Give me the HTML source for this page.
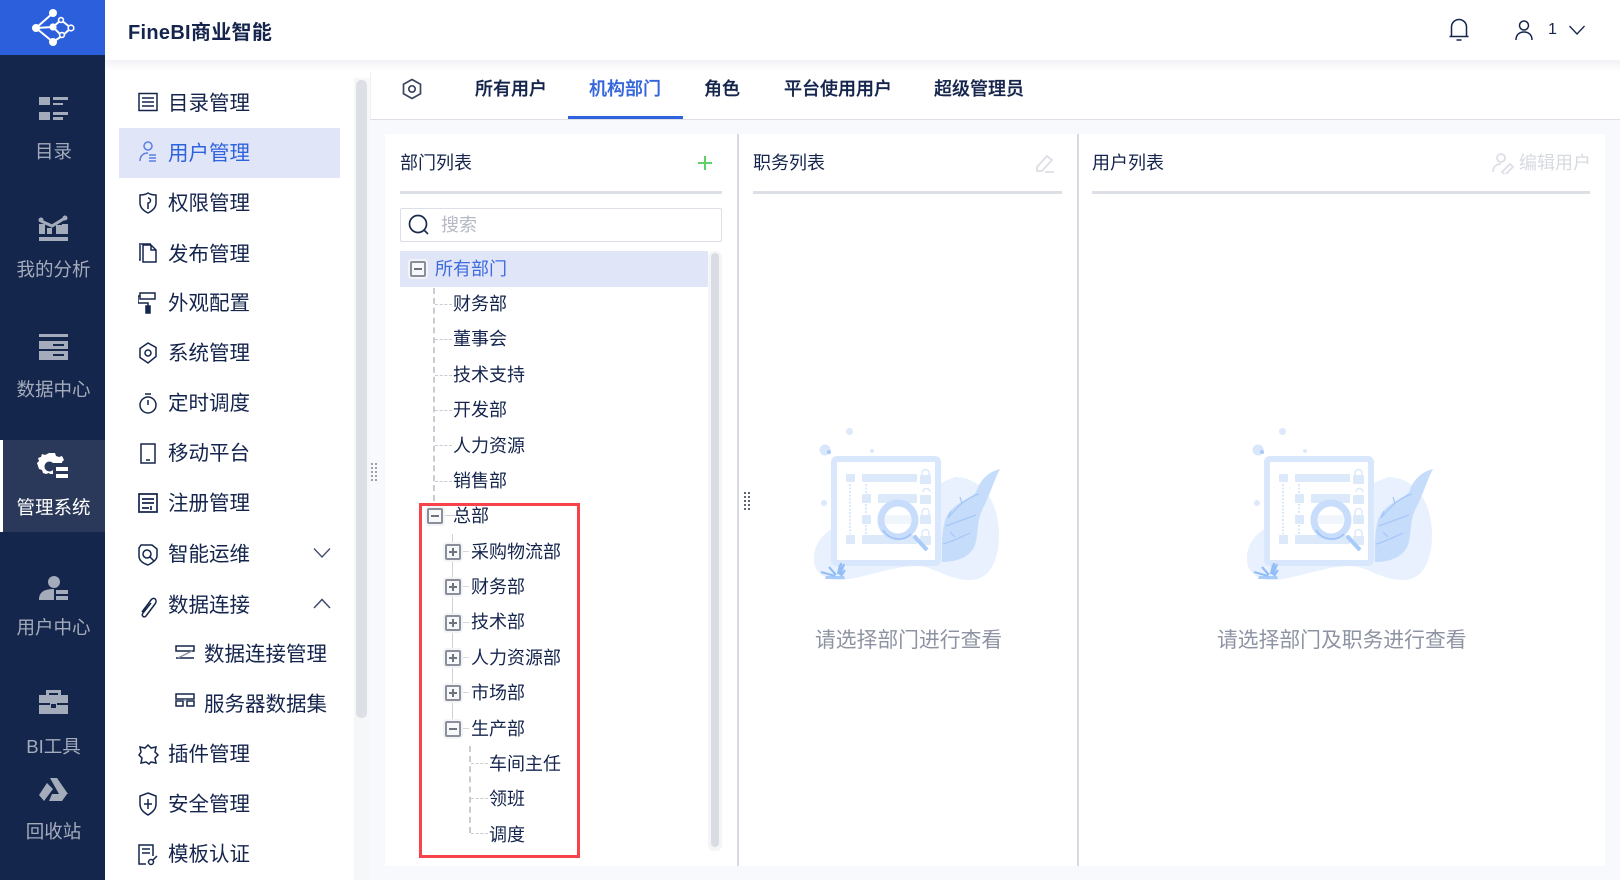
<!DOCTYPE html>
<html lang="zh">
<head>
<meta charset="utf-8">
<title>FineBI</title>
<style>
html,body{margin:0;padding:0;width:1620px;height:880px;overflow:hidden;background:#fff}
body{position:relative;font-family:"Liberation Sans","Noto Sans CJK SC",sans-serif;color:#14244c}
div,span,svg{position:absolute;display:block}
.t{white-space:nowrap;line-height:30px;height:30px}
.side{left:0;width:107px;text-align:center;font-size:18.5px;color:#a4abba}
.m{font-size:20.5px;left:168px;color:#14244c}
.tab{font-size:18px;top:74px;font-weight:500;-webkit-text-stroke:.25px #14244c}
.tr{font-size:18px}
.box{width:12px;height:12px;border:2px solid #8b8f9b;border-radius:2px;background:#f7f8fa;box-shadow:0 0 0 2px #f3f4f6}
.box i{position:absolute;left:2px;top:5px;width:8px;height:2px;background:#6f7380;display:block}
.box b{position:absolute;left:5px;top:2px;width:2px;height:8px;background:#6f7380;display:block}
.hd{font-size:18px;top:148px}
.ln{height:3px;top:191px;background:#dcdfe6}
.dh{left:0;height:0;border-top:1px dashed #c9ccd3}
.dv{width:0;border-left:2px dashed #c9ccd3}
.ic{fill:none;stroke:#15264c;stroke-width:1.5}
</style>
</head>
<body>
<!-- left nav -->
<div style="left:0;top:0;width:105px;height:880px;background:#15264c"></div>
<div style="left:0;top:0;width:105px;height:55px;background:#2c5fdc"></div>
<svg style="left:0;top:0" width="105" height="55" viewBox="0 0 105 55">
<g stroke="#fff" stroke-width="2" fill="none"><path d="M53 13 36 28 53 42M36 28 53 27 62 36 53 42M53 27 61 20 71 28 62 36"/></g>
<g fill="#fff"><circle cx="53" cy="13" r="4"/><circle cx="36" cy="28" r="4"/><circle cx="53" cy="27" r="3.6"/><circle cx="53" cy="42" r="4"/></g>
<g fill="#2c5fdc" stroke="#fff" stroke-width="1.6"><circle cx="61" cy="20" r="2.4"/><circle cx="71" cy="28" r="2.8"/><circle cx="62" cy="35" r="2.4"/></g>
</svg>
<div style="left:0;top:440px;width:105px;height:92px;background:#2a3859"></div>
<div style="left:0;top:440px;width:3px;height:92px;background:#fff"></div>
<svg style="left:0;top:90px" width="105" height="720" viewBox="0 90 105 720" fill="#a4abba">
<!-- catalog -->
<path d="M39 97h11v8H39zM39 112h11v8H39zM53 97h15v3H53zM53 103h10v2H53zM53 112h15v3H53zM53 117h10v3H53z"/>
<!-- analysis -->
<path d="M39 237h29v4H39zM39 224h6v10h-6zM47 228h5v6h-5zM56 225h6v9h-6zM62 224h6v10h-6z"/><path d="M41 221l11 5 13-8" fill="none" stroke="#a4abba" stroke-width="3"/><circle cx="41" cy="220" r="2.5"/><circle cx="65" cy="218" r="2.5"/>
<!-- data center -->
<path d="M39 334h29v3H39zM39 341h29v8H39zM39 351h29v9H39z"/><path d="M53 344h11v2H53zM53 354h11v2H53z" fill="#15264c"/>
<!-- users -->
<circle cx="54" cy="582" r="6"/><path d="M39 600c0-8 5-11 15-11v11zM56 590h12v4H56zM56 596h12v4H56z"/>
<!-- BI tool -->
<path d="M46 695v-5h15v5h7v8H39v-8zM49 695h9v-2h-9zM39 705h11v-2h7v2h11v9H39zM50 703h7v6h-7z"/><path d="M51 704h5v4h-5z" fill="#15264c"/>
<!-- recycle -->
<path d="M50 778h7l11 16h-9zM47 783l-8 12 5 6 9-12zM49 801l3-7h15l-5 7z"/>
</svg>
<svg style="left:0;top:450px" width="105" height="35" viewBox="0 450 105 35">
<path fill="#fff" d="M49 453h6l1 3 3 1 3-1 2 4-2 2v1h-9a5 5 0 1 0 0 7v4h-3l-1-1-3 1-3-1-1-3-3-1-1-3-1-3 2-2-1-3 3-1 1-3 3 1zM56 467h12v4H56zM56 474h12v4H56z"/>
</svg>
<div class="t side" style="top:137px">目录</div>
<div class="t side" style="top:255px">我的分析</div>
<div class="t side" style="top:375px">数据中心</div>
<div class="t side" style="top:493px;color:#fff">管理系统</div>
<div class="t side" style="top:613px">用户中心</div>
<div class="t side" style="top:732px">BI工具</div>
<div class="t side" style="top:817px">回收站</div>

<!-- header -->
<div class="t" style="left:128px;top:18px;font-size:20px;font-weight:700;letter-spacing:.3px">FineBI商业智能</div>
<div style="left:105px;top:60px;width:1515px;height:11px;background:linear-gradient(#f1f2f5,#fff)"></div>
<svg style="left:1448px;top:18px" width="22" height="24" viewBox="0 0 22 24" class="ic"><path d="M3.5 18.5V9a7.5 7.5 0 0 1 15 0v9.500zM1.500 18.500h19M8.500 22h5"/></svg>
<svg style="left:1512px;top:19px" width="24" height="24" viewBox="0 0 24 24" fill="none" stroke="#15264c" stroke-width="1.500"><circle cx="12" cy="6.500" r="4.500"/><path d="M4 21c0-5 3-8 8-8s8 3 8 8"/></svg>
<div class="t" style="left:1548px;top:15px;font-size:16px;color:#14244c">1</div>
<svg style="left:1568px;top:24px" width="18" height="12" viewBox="0 0 18 12" fill="none" stroke="#15264c" stroke-width="1.300"><path d="M1.500 2 9 10l7.500-8"/></svg>

<!-- menu -->
<div style="left:119px;top:128px;width:221px;height:50px;background:#e0e6f8"></div>
<div class="t m" style="top:89px">目录管理</div>
<div class="t m" style="top:139px;color:#2f62dd">用户管理</div>
<div class="t m" style="top:189px">权限管理</div>
<div class="t m" style="top:239.500px">发布管理</div>
<div class="t m" style="top:289px">外观配置</div>
<div class="t m" style="top:339px">系统管理</div>
<div class="t m" style="top:389px">定时调度</div>
<div class="t m" style="top:439px">移动平台</div>
<div class="t m" style="top:489px">注册管理</div>
<div class="t m" style="top:540px">智能运维</div>
<div class="t m" style="top:591px">数据连接</div>
<div class="t m" style="top:639.500px;left:204px">数据连接管理</div>
<div class="t m" style="top:689.500px;left:204px">服务器数据集</div>
<div class="t m" style="top:740px">插件管理</div>
<div class="t m" style="top:790px">安全管理</div>
<div class="t m" style="top:840px">模板认证</div>
<svg style="left:138px;top:90px" width="22" height="790" viewBox="0 0 22 790" class="ic">
<!-- 目录 y=13 -->
<path d="M1 3.500h18v17H1zM4 8h12M4 12h12M4 16h12"/>
<!-- 用户 y=63 -->
<g stroke="#5a7fe2"><circle cx="10" cy="56" r="4"/><path d="M2 71c0-5 3-8 8-8M11 65h7M11 68h7M11 71h7"/></g>
<!-- 权限 y=113 -->
<path d="M10 103c3 2 6 2 8 2v8c0 5-4 8-8 10-4-2-8-5-8-10v-8c2 0 5 0 8-2zM10 108a2.500 2.500 0 0 1 0 5v6"/>
<!-- 发布 y=163 -->
<path d="M2 155v15h-1M5 155h8l5 5v12H5zM13 155v5h5"/><path d="M1 154h12" />
<!-- 外观 y=213 -->
<path d="M1 204h0M2 203h15v6H2zM2 206H0v7h10v3"/><path d="M8 216h4v7H8z" fill="#15264c"/>
<!-- 系统 y=263 -->
<path d="M10 253l8 4.500v9L10 273l-8-5.500v-9z"/><circle cx="10" cy="263" r="3"/>
<!-- 定时 y=313 -->
<circle cx="10" cy="315" r="8"/><path d="M7 304h6M10 310v5"/>
<!-- 移动 y=363 -->
<path d="M3 354h14v19H3zM8 370h4"/>
<!-- 注册 y=413 -->
<path d="M1 404h18v18H1zM4 409h12M4 413h12M4 418h7M13 416v4" stroke-width="1.700"/>
<!-- 智能 y=464 -->
<path d="M3 455h11l5 4v7c0 3-3 6-9 9-6-2-9-5-9-9v-8z"/><circle cx="9" cy="464" r="4"/><path d="M12 467l4 4"/>
<!-- 数据连接 y=515 -->
<path d="M4 522l9-12c3-4 7 0 4 4l-9 12c-2 2-5 0-3-3l8-10" />
<!-- 插件 y=665 -->
<path d="M10 655l3 3 5-1-1 5 3 3-3 3 1 5-5-1-2 2-3-2-5 1 1-5-3-3 2-3-1-5 5 1z"/>
<!-- 安全 y=714 -->
<path d="M10 703l8 3v8c0 5-3 8-8 11-5-3-8-6-8-11v-8zM10 709v10M6 714h8"/>
<!-- 模板 y=764 -->
<path d="M15 766v-11H1v19h7M4 759h8M4 763h8"/><circle cx="13" cy="772" r="2.500"/><path d="M15 770l4-4"/>
</svg>
<svg style="left:174px;top:640px" width="22" height="70" viewBox="0 0 22 70" fill="none" stroke="#15264c" stroke-width="1.500">
<path d="M2 6h18v5H2zM2 18h18"/><path d="M18 11l-14 7" stroke="#8b919e"/>
<path d="M2 54h18v5H2zM2 66h7v-5H2zM13 66h7v-5h-7z" /><path d="M11 59v2" stroke="#8b919e"/>
</svg>
<svg style="left:313px;top:547px" width="18" height="12" viewBox="0 0 18 12" fill="none" stroke="#3f4c6c" stroke-width="1.300"><path d="M1 1.500 9 10l8-8.500"/></svg>
<svg style="left:313px;top:598px" width="18" height="12" viewBox="0 0 18 12" fill="none" stroke="#3f4c6c" stroke-width="1.500"><path d="M1 10 9 1.500 17 10"/></svg>
<!-- menu scrollbar -->
<div style="left:354px;top:78px;width:16px;height:802px;background:#f6f7f9"></div>
<div style="left:356px;top:80px;width:11px;height:638px;background:#dcdfe4;border-radius:5px"></div>

<!-- content -->
<div style="left:370px;top:71px;width:1250px;height:49px;background:#fff;border-left:1px solid #f0f1f4"></div>
<div style="left:370px;top:119px;width:1250px;height:761px;background:#f7f9fd;border-top:1px solid #dcdfe5;box-sizing:border-box"></div>
<svg style="left:401px;top:78px" width="22" height="22" viewBox="0 0 22 22" fill="none" stroke="#3a4560" stroke-width="1.700"><path d="M11 1.500l8.500 4.800v9.400L11 20.500l-8.500-4.800V6.300z"/><circle cx="11" cy="11" r="3.200"/></svg>
<div class="t tab" style="left:475px">所有用户</div>
<div class="t tab" style="left:589px;color:#3465dc;-webkit-text-stroke-color:#3465dc">机构部门</div>
<div style="left:568px;top:116px;width:115px;height:3px;background:#2f62dd"></div>
<div class="t tab" style="left:704px">角色</div>
<div class="t tab" style="left:784px">平台使用用户</div>
<div class="t tab" style="left:934px">超级管理员</div>

<div style="left:385px;top:134px;width:1220px;height:732px;background:#fff"></div>
<div style="left:737px;top:134px;width:2px;height:732px;background:#d8dae1"></div>
<div style="left:1077px;top:134px;width:2px;height:732px;background:#d8dae1"></div>

<!-- drag handles -->
<svg style="left:370px;top:462px" width="8" height="20" viewBox="0 0 8 20" fill="#9aa0ad"><path d="M1 1h2v2H1zM5 1h2v2H5zM1 5h2v2H1zM5 5h2v2H5zM1 9h2v2H1zM5 9h2v2H5zM1 13h2v2H1zM5 13h2v2H5zM1 17h2v2H1zM5 17h2v2H5z"/></svg>
<svg style="left:743px;top:491px" width="8" height="20" viewBox="0 0 8 20" fill="#5d6478"><path d="M1 1h2v2H1zM5 1h2v2H5zM1 5h2v2H1zM5 5h2v2H5zM1 9h2v2H1zM5 9h2v2H5zM1 13h2v2H1zM5 13h2v2H5zM1 17h2v2H1zM5 17h2v2H5z"/></svg>

<!-- column 1 -->
<div class="t hd" style="left:400px">部门列表</div>
<svg style="left:697px;top:155px" width="16" height="16" viewBox="0 0 16 16" fill="#5fd068"><path d="M1 7h14v2H1zM7 1h2v14H7z"/></svg>
<div class="ln" style="left:400px;width:322px"></div>
<div style="left:400px;top:208px;width:322px;height:34px;box-sizing:border-box;border:1.500px solid #dcdfe6;border-radius:2px;background:#fff"></div>
<svg style="left:407px;top:213px" width="24" height="24" viewBox="0 0 24 24" fill="none" stroke="#1d2b50" stroke-width="1.700"><circle cx="11" cy="11" r="8.500"/><path d="M17 17l4 4"/></svg>
<div class="t" style="left:441px;top:210px;font-size:18px;color:#b4b9c4">搜索</div>

<!-- tree -->
<div style="left:400px;top:251px;width:308px;height:36px;background:#e0e6f8"></div>
<div class="box" style="left:410px;top:261px"><i></i></div>
<div class="t tr" style="left:435px;top:253.500px;color:#3f6adf">所有部门</div>

<div class="dv" style="left:433px;top:288px;height:213px"></div>
<div class="dh" style="left:435px;top:304px;width:17px"></div>
<div class="dh" style="left:435px;top:339px;width:17px"></div>
<div class="dh" style="left:435px;top:375px;width:17px"></div>
<div class="dh" style="left:435px;top:410px;width:17px"></div>
<div class="dh" style="left:435px;top:445px;width:17px"></div>
<div class="dh" style="left:435px;top:481px;width:17px"></div>
<div class="t tr" style="left:453px;top:289px">财务部</div>
<div class="t tr" style="left:453px;top:324px">董事会</div>
<div class="t tr" style="left:453px;top:360px">技术支持</div>
<div class="t tr" style="left:453px;top:395px">开发部</div>
<div class="t tr" style="left:453px;top:431px">人力资源</div>
<div class="t tr" style="left:453px;top:466px">销售部</div>

<div style="left:452px;top:534px;width:1px;height:195px;background:#cfd1d8"></div>
<div style="left:443px;top:515px;width:17px;height:1px;background:#cfd1d8"></div>
<div style="left:460px;top:551px;width:9px;height:1px;background:#d6d8de"></div>
<div style="left:460px;top:586px;width:9px;height:1px;background:#d6d8de"></div>
<div style="left:460px;top:622px;width:9px;height:1px;background:#d6d8de"></div>
<div style="left:460px;top:657px;width:9px;height:1px;background:#d6d8de"></div>
<div style="left:460px;top:692px;width:9px;height:1px;background:#d6d8de"></div>
<div style="left:460px;top:728px;width:9px;height:1px;background:#d6d8de"></div>
<div class="box" style="left:427px;top:508px"><i></i></div>
<div class="t tr" style="left:453px;top:501px">总部</div>
<div class="box" style="left:445px;top:544px"><i></i><b></b></div>
<div class="box" style="left:445px;top:579px"><i></i><b></b></div>
<div class="box" style="left:445px;top:615px"><i></i><b></b></div>
<div class="box" style="left:445px;top:650px"><i></i><b></b></div>
<div class="box" style="left:445px;top:685px"><i></i><b></b></div>
<div class="box" style="left:445px;top:721px"><i></i></div>
<div class="t tr" style="left:471px;top:537px">采购物流部</div>
<div class="t tr" style="left:471px;top:572px">财务部</div>
<div class="t tr" style="left:471px;top:607px">技术部</div>
<div class="t tr" style="left:471px;top:643px">人力资源部</div>
<div class="t tr" style="left:471px;top:678px">市场部</div>
<div class="t tr" style="left:471px;top:713.500px">生产部</div>
<div class="dv" style="left:469px;top:746px;height:87px"></div>
<div class="dh" style="left:471px;top:763px;width:17px"></div>
<div class="dh" style="left:471px;top:798px;width:17px"></div>
<div class="dh" style="left:471px;top:833px;width:17px"></div>
<div class="t tr" style="left:489px;top:749px">车间主任</div>
<div class="t tr" style="left:489px;top:784px">领班</div>
<div class="t tr" style="left:489px;top:819.500px">调度</div>

<!-- red rectangle -->
<div style="left:419px;top:503px;width:161px;height:355px;box-sizing:border-box;border:3px solid #f6444a"></div>

<!-- tree scrollbar -->
<div style="left:708px;top:251px;width:14px;height:600px;background:#f4f5f7;border-radius:6px"></div>
<div style="left:711px;top:253px;width:8px;height:594px;background:#d9dce2;border-radius:4px"></div>

<!-- column 2 -->
<div class="t hd" style="left:753px">职务列表</div>
<svg style="left:1034px;top:152px" width="22" height="22" viewBox="0 0 22 22" fill="none" stroke="#dcdfe5" stroke-width="1.800"><path d="M3 15 13 4l5 4L8 19H3zM11 20h9"/></svg>
<div class="ln" style="left:753px;width:309px"></div>

<!-- column 3 -->
<div class="t hd" style="left:1092px">用户列表</div>
<svg style="left:1492px;top:152px" width="22" height="22" viewBox="0 0 22 22" fill="none" stroke="#dcdfe5" stroke-width="1.800"><circle cx="9" cy="6" r="4"/><path d="M1 20c0-5 3-8 8-8M10 20l8-8 3 3-8 8z"/></svg>
<div class="t" style="left:1519px;top:148px;font-size:18px;color:#d7dae1">编辑用户</div>
<div class="ln" style="left:1092px;width:498px"></div>

<!-- illustration -->
<svg style="left:780px;top:400px" width="260" height="215" viewBox="0 0 260 215">
<defs>
<g id="ill">
<path fill="#e8f1fd" d="M50 130C38 138 33 150 34 162C36 175 48 181 62 180C85 178 115 165 140 166C155 168 170 180 190 180C210 180 219 160 219 135C219 105 205 78 175 77L120 100Z"/>
<path fill="#c6dcfb" d="M220 69C208 72 200 80 196 92C190 100 172 102 165 120C161 135 162 150 162 162C175 162 190 158 195 145C199 132 196 122 203 108C210 95 214 80 220 69Z"/>
<g stroke="#a5c7f8" stroke-width="1.200" fill="none"><path d="M163 144c8-2 16-6 27-11M166 126l30-11M168 118c10-12 18-20 31-24M182 104l-2-7M168 118l3-7M175 137l-5-5"/></g>
<rect x="54" y="59" width="104" height="104" rx="3" fill="#fff" stroke="#d8e7fc" stroke-width="6"/>
<g fill="#dce9fb">
<rect x="82" y="74" width="55" height="8" rx="1"/><rect x="98" y="94" width="39" height="9" rx="1"/><rect x="98" y="115" width="39" height="9" rx="1"/><rect x="82" y="135" width="55" height="9" rx="1"/>
<rect x="66" y="74" width="9" height="8" rx="1"/><rect x="82" y="94" width="9" height="9" rx="1"/><rect x="82" y="115" width="9" height="9" rx="1"/><rect x="66" y="135" width="9" height="9" rx="1"/>
<rect x="140" y="75" width="11" height="9" rx="1"/><rect x="140" y="95" width="11" height="9" rx="1"/><rect x="140" y="115" width="11" height="9" rx="1"/><rect x="140" y="136" width="11" height="9" rx="1"/>
</g>
<path d="M70 84v50M86 84v10M86 104v10M86 125v9" stroke="#dce9fb" stroke-width="2" stroke-dasharray="2 1.500"/>
<g fill="none" stroke="#dce9fb" stroke-width="1.500"><path d="M142 75v-2a3.500 3.500 0 0 1 7 0v2M142 115v-3a3.500 3.500 0 0 1 7 0v3M142 136v-3a3.500 3.500 0 0 1 7 0v3M143 92a3.500 3.500 0 0 1 7 0"/></g>
<circle cx="118" cy="120" r="17" fill="#fff" fill-opacity=".6" stroke="#c8dcfb" stroke-width="7"/>
<path d="M103 130c6 10 20 12 28 4" fill="none" stroke="#9cc2f8" stroke-width="1.500"/>
<path d="M134 136l13 14" stroke="#a9cbf9" stroke-width="4"/>
<circle cx="45" cy="50" r="5.500" fill="#d8e7fc"/><circle cx="49" cy="52" r="2" fill="#a8c9f8"/>
<circle cx="69.500" cy="31.500" r="3.500" fill="#dce9fb"/><circle cx="92" cy="51" r="2" fill="#dce9fb"/><circle cx="44" cy="103" r="3" fill="#dce9fb"/>
<path d="M45 179h20l-1-3H46z" fill="#a9cbf9"/>
<g stroke="#93bdf7" stroke-width="2.200" fill="none"><path d="M55 176l-14-4M56 175l-7-8M58 174l2-9M60 175l1-12M60 175l4-11M61 176l4-6"/></g>
</g>
</defs>
<use href="#ill"/>
</svg>
<svg style="left:1213px;top:400px" width="260" height="215" viewBox="0 0 260 215"><use href="#ill"/></svg>
<div class="t" style="left:815px;top:626px;font-size:20.800px;color:#8d93a2">请选择部门进行查看</div>
<div class="t" style="left:1217px;top:626px;font-size:20.800px;color:#8d93a2">请选择部门及职务进行查看</div>
</body>
</html>
